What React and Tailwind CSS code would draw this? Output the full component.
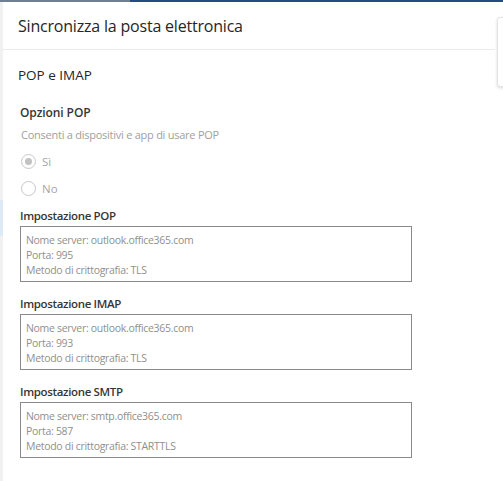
import { useState } from 'react';

const settings = [
  {
    title: 'Impostazione POP',
    lines: ['Nome server: outlook.office365.com', 'Porta: 995', 'Metodo di crittografia: TLS'],
  },
  {
    title: 'Impostazione IMAP',
    lines: ['Nome server: outlook.office365.com', 'Porta: 993', 'Metodo di crittografia: TLS'],
  },
  {
    title: 'Impostazione SMTP',
    lines: ['Nome server: smtp.office365.com', 'Porta: 587', 'Metodo di crittografia: STARTTLS'],
  },
];

function Radio({ label, checked }) {
  return (
    <label className="flex items-center h-[27px] gap-[6px] text-[11.5px] text-[#a6a6a6]">
      <span className="w-[15px] h-[15px] rounded-full border border-[#c8c8c8] flex items-center justify-center">
        {checked && <span className="w-[7px] h-[7px] rounded-full bg-[#c2c2c2]" />}
      </span>
      {label}
    </label>
  );
}

function SettingBox({ title, lines, first }) {
  return (
    <div className={first ? 'mt-[6px]' : 'mt-[14px]'}>
      <h3 className="text-[11.5px] font-semibold text-[#363636] leading-[16px] tracking-[-0.35px]">{title}</h3>
      <div className="mt-[2px] w-[392px] h-[56px] border border-[#8a8a8a] pl-[5px] pt-[6px] text-[10.5px] leading-[15px] text-[#8f8f8f] tracking-[-0.3px]">
        {lines.map((line) => (
          <div key={line}>{line}</div>
        ))}
      </div>
    </div>
  );
}

export default function App() {
  const [pop] = useState('si');

  return (
    <div className="w-[503px] h-[481px] bg-white relative overflow-hidden" style={{ fontFamily: '"Open Sans", "Noto Sans", sans-serif' }}>
      {/* Top accent line */}
      <div className="flex h-[2px]">
        <div className="w-[130px] bg-[#6e7f91]" />
        <div className="flex-1 bg-[#1f4e85]" />
      </div>

      <div className="flex h-[479px]">
        {/* Left edge strip */}
        <div className="w-[3px] bg-[#f1f1f1] flex flex-col">
          <div className="h-[198px]" />
          <div className="h-[36px] bg-[#dde9f5]" />
        </div>

        <div className="flex-1">
          {/* Header */}
          <div className="h-[48px] border-b border-[#ebebeb] mr-[8px] flex items-center pl-[15px]">
            <h1 className="text-[16px] text-[#262626] tracking-[-0.2px]">Sincronizza la posta elettronica</h1>
          </div>

          <div className="pl-[15px] pr-[8px]">
            <h2 className="mt-[15px] text-[13.5px] text-[#262626] leading-[20px]">POP e IMAP</h2>

            <div className="mt-[20px] pl-[2px]">
              <h3 className="text-[12px] font-semibold text-[#363636] leading-[16px] tracking-[-0.1px]">Opzioni POP</h3>
              <p className="mt-[6px] text-[11px] text-[#a0a0a0] leading-[16px] tracking-[-0.25px] pl-[1px]">Consenti a dispositivi e app di usare POP</p>
              <div className="mt-[5px] pl-[1px]">
                <Radio label="Sì" checked={pop === 'si'} />
                <Radio label="No" checked={pop === 'no'} />
              </div>

              {settings.map((s, i) => (
                <SettingBox key={s.title} title={s.title} lines={s.lines} first={i === 0} />
              ))}
            </div>
          </div>
        </div>
      </div>

      {/* Cut-off card at right edge */}
      <div className="absolute left-[497px] top-[17px] w-[20px] h-[70px] rounded-[3px] border border-[#e4e4e4] bg-white shadow-[0_1px_3px_rgba(0,0,0,0.15)]" />
    </div>
  );
}
